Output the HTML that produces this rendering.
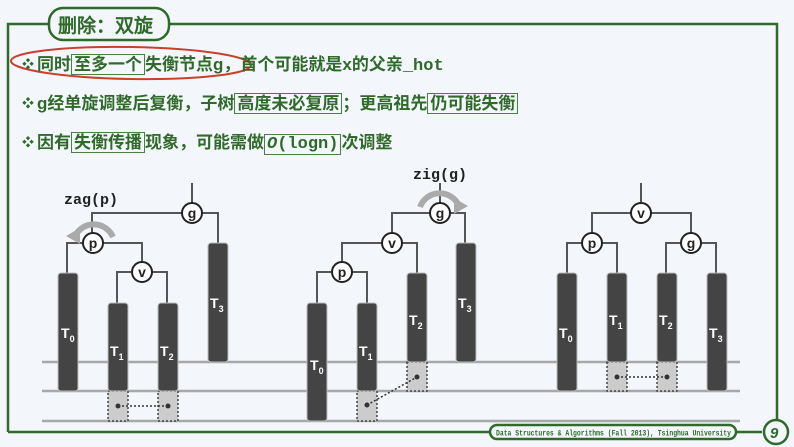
<html><head><style>
body{margin:0;width:794px;height:447px;background:#f3f7fb;position:relative;overflow:hidden;font-family:"Liberation Sans","Noto Sans CJK SC",sans-serif}
.t{position:absolute;left:22px;color:#2f6a2a;font-weight:bold;font-size:17px;white-space:nowrap;line-height:22px}
.bu{font-size:12px;vertical-align:2px;margin-right:3px}
.b{border:1.5px solid #4a7f44;padding:0 2px}
.m{font-family:"Liberation Mono","DejaVu Sans Mono",monospace}
svg text{font-family:"Liberation Sans",sans-serif;font-weight:bold}
</style></head><body>
<svg width="794" height="447" style="position:absolute;left:0;top:0">
<g stroke="#2f6a2a" stroke-width="2.5" fill="none">
<path d="M8 432 V24 H52 M166 24 H777 V420"/>
<rect x="49" y="8" width="120" height="32" rx="14" fill="#f3f7fb"/>
<path d="M8 432 H490 M735 432 H762"/>
<rect x="490" y="425" width="246" height="14" rx="7" fill="#f3f7fb"/>
<circle cx="776" cy="432" r="12" fill="#f3f7fb"/>
</g>
<text x="58" y="32" fill="#2f6a2a" font-size="19" font-family="Noto Sans CJK SC">删除：双旋</text>
<text x="496" y="435.5" fill="#2f6a2a" font-size="8" textLength="235" lengthAdjust="spacingAndGlyphs" style="font-family:'Liberation Mono',monospace">Data Structures &amp; Algorithms (Fall 2013), Tsinghua University</text>
<text x="770" y="438" fill="#2f6a2a" font-size="15" font-style="italic">9</text>
<ellipse cx="131" cy="63" rx="120" ry="16" fill="none" stroke="#c8402e" stroke-width="2" transform="rotate(1 131 63)"/>
<g stroke="#a8a8a8" stroke-width="2.5"><path d="M42 362 H740 M42 391 H740 M42 421 H740"/></g>
<g stroke="#555" stroke-width="2" fill="none">
<path d="M192 183V213 M92 233V213H218V243 M67 273V243H142V272 M117 303V272H167V303"/>
<path d="M440 183V213 M392 233V213H465V243 M342 262V243H417V273 M317 303V272H367V303"/>
<path d="M641 183V213 M567 273V243H617V273 M592 233V213H691V243 M666 273V243H716V273"/>
</g>
<g fill="#ccc" stroke="#444" stroke-width="1.5" stroke-dasharray="2,2">
<rect x="108" y="391" width="20" height="30"/><rect x="158" y="391" width="20" height="30"/>
<rect x="357" y="391" width="20" height="30"/><rect x="407" y="362" width="20" height="29"/>
<rect x="607" y="362" width="20" height="29"/><rect x="657" y="362" width="20" height="29"/>
</g>
<g stroke="#333" stroke-width="1.5" stroke-dasharray="2,2"><path d="M118 406H168 M367 405L417 377 M617 377H667"/></g>
<g fill="#333"><circle cx="118" cy="406" r="2.5"/><circle cx="168" cy="406" r="2.5"/><circle cx="367" cy="405" r="2.5"/><circle cx="417" cy="377" r="2.5"/><circle cx="617" cy="377" r="2.5"/><circle cx="667" cy="377" r="2.5"/></g>
<g fill="#444" stroke="#bbb" stroke-width="1">
<rect x="58" y="273" width="20" height="118" rx="3"/><rect x="108" y="303" width="20" height="88" rx="3"/><rect x="158" y="303" width="20" height="88" rx="3"/><rect x="208" y="243" width="20" height="119" rx="3"/>
<rect x="307" y="303" width="20" height="118" rx="3"/><rect x="357" y="303" width="20" height="88" rx="3"/><rect x="407" y="273" width="20" height="89" rx="3"/><rect x="456" y="243" width="20" height="119" rx="3"/>
<rect x="557" y="273" width="20" height="118" rx="3"/><rect x="607" y="273" width="20" height="89" rx="3"/><rect x="657" y="273" width="20" height="89" rx="3"/><rect x="707" y="273" width="20" height="118" rx="3"/>
</g>
<g fill="#fff" font-size="14">
<text x="61" y="338">T<tspan font-size="9" dy="4">0</tspan></text><text x="110" y="356">T<tspan font-size="9" dy="4">1</tspan></text><text x="160" y="356">T<tspan font-size="9" dy="4">2</tspan></text><text x="210" y="308">T<tspan font-size="9" dy="4">3</tspan></text>
<text x="310" y="370">T<tspan font-size="9" dy="4">0</tspan></text><text x="359" y="356">T<tspan font-size="9" dy="4">1</tspan></text><text x="409" y="325">T<tspan font-size="9" dy="4">2</tspan></text><text x="458" y="308">T<tspan font-size="9" dy="4">3</tspan></text>
<text x="559" y="338">T<tspan font-size="9" dy="4">0</tspan></text><text x="609" y="325">T<tspan font-size="9" dy="4">1</tspan></text><text x="659" y="325">T<tspan font-size="9" dy="4">2</tspan></text><text x="709" y="338">T<tspan font-size="9" dy="4">3</tspan></text>
</g>
<g fill="none" stroke="#aaa" stroke-width="6"><path d="M113 237A21 21 0 0 0 75 236"/><path d="M420 207A21 21 0 0 1 459 206"/></g>
<g fill="#aaa"><path d="M66 236L80 228L80 244Z"/><path d="M468 206L454 198L454 214Z"/></g>
<g fill="#fff" stroke="#222" stroke-width="2">
<circle cx="192" cy="213" r="10"/><circle cx="93" cy="243" r="10"/><circle cx="142" cy="272" r="10"/>
<circle cx="440" cy="213" r="10"/><circle cx="392" cy="243" r="10"/><circle cx="342" cy="272" r="10"/>
<circle cx="641" cy="213" r="10"/><circle cx="592" cy="243" r="10"/><circle cx="691" cy="243" r="10"/>
</g>
<g fill="#222" font-size="14" text-anchor="middle">
<text x="192" y="218">g</text><text x="93" y="248">p</text><text x="142" y="277">v</text>
<text x="440" y="218">g</text><text x="392" y="248">v</text><text x="342" y="277">p</text>
<text x="641" y="218">v</text><text x="592" y="248">p</text><text x="691" y="248">g</text>
</g>
<text x="64" y="204" font-size="15" fill="#222" style="font-family:'Liberation Mono',monospace">zag(p)</text>
<text x="413" y="179" font-size="15" fill="#222" style="font-family:'Liberation Mono',monospace">zig(g)</text>
</svg>
<div class="t" style="top:53px"><span class="bu">❖</span>同时<span class="b">至多一个</span>失衡节点g，首个可能就是x的父亲<span class="m">_hot</span></div>
<div class="t" style="top:92px"><span class="bu">❖</span>g经单旋调整后复衡，子树<span class="b">高度未必复原</span>；更高祖先<span class="b">仍可能失衡</span></div>
<div class="t" style="top:131px"><span class="bu">❖</span>因有<span class="b">失衡传播</span>现象，可能需做<span class="b m"><i>O</i>(logn)</span>次调整</div>
</body></html>
